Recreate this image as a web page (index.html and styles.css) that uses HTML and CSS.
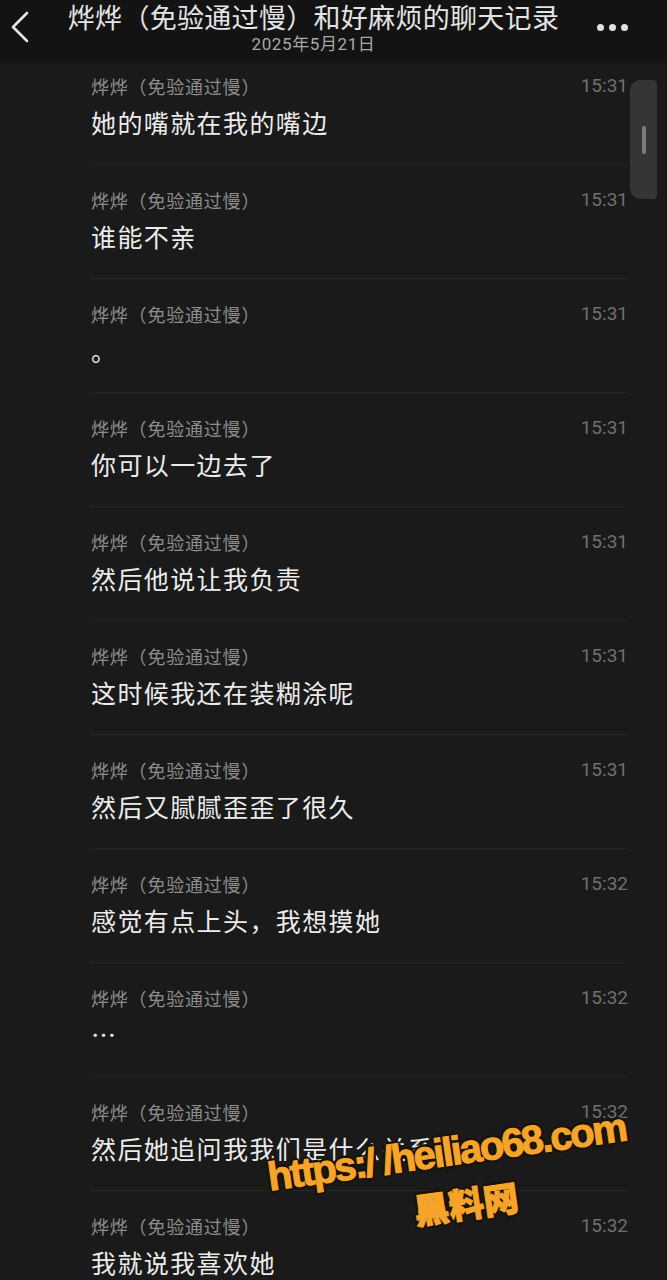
FILE: index.html
```html
<!DOCTYPE html>
<html lang="zh-CN">
<head>
    <meta charset="UTF-8">
    <meta name="viewport" content="width=device-width, initial-scale=1.0">
    <title>聊天记录</title>
    <link rel="stylesheet" href="styles.css">
</head>
<body>
    <div class="screen">
        <div class="header">
            <div class="back">
                <svg width="22" height="32" viewBox="0 0 22 32"><path d="M18 2 L4 16 L18 30" fill="none" stroke="#e6e6e6" stroke-width="2.6" stroke-linecap="round" stroke-linejoin="round"/></svg>
            </div>
            <div class="titles">
                <div class="title">烨烨（免验通过慢）和好麻烦的聊天记录</div>
                <div class="date">2025年5月21日</div>
            </div>
            <div class="more"><span></span><span></span><span></span></div>
        </div>

        <div class="list">
            <div class="row">
                <div class="meta"><span class="name">烨烨（免验通过慢）</span><span class="time">15:31</span></div>
                <div class="text">她的嘴就在我的嘴边</div>
            </div>
            <div class="row">
                <div class="meta"><span class="name">烨烨（免验通过慢）</span><span class="time">15:31</span></div>
                <div class="text">谁能不亲</div>
            </div>
            <div class="row">
                <div class="meta"><span class="name">烨烨（免验通过慢）</span><span class="time">15:31</span></div>
                <div class="text">。</div>
            </div>
            <div class="row">
                <div class="meta"><span class="name">烨烨（免验通过慢）</span><span class="time">15:31</span></div>
                <div class="text">你可以一边去了</div>
            </div>
            <div class="row">
                <div class="meta"><span class="name">烨烨（免验通过慢）</span><span class="time">15:31</span></div>
                <div class="text">然后他说让我负责</div>
            </div>
            <div class="row">
                <div class="meta"><span class="name">烨烨（免验通过慢）</span><span class="time">15:31</span></div>
                <div class="text">这时候我还在装糊涂呢</div>
            </div>
            <div class="row">
                <div class="meta"><span class="name">烨烨（免验通过慢）</span><span class="time">15:31</span></div>
                <div class="text">然后又腻腻歪歪了很久</div>
            </div>
            <div class="row">
                <div class="meta"><span class="name">烨烨（免验通过慢）</span><span class="time">15:32</span></div>
                <div class="text">感觉有点上头，我想摸她</div>
            </div>
            <div class="row">
                <div class="meta"><span class="name">烨烨（免验通过慢）</span><span class="time">15:32</span></div>
                <div class="text">…</div>
            </div>
            <div class="row">
                <div class="meta"><span class="name">烨烨（免验通过慢）</span><span class="time">15:32</span></div>
                <div class="text">然后她追问我我们是什么关系</div>
            </div>
            <div class="row">
                <div class="meta"><span class="name">烨烨（免验通过慢）</span><span class="time">15:32</span></div>
                <div class="text">我就说我喜欢她</div>
            </div>
        </div>

        <div class="scroll-thumb"><span></span></div>

        <div class="watermark">
            <div class="wm-url">https:/ /heiliao68.com</div>
            <div class="wm-name">黑料网</div>
        </div>
    </div>
</body>
</html>
```

FILE: styles.css
```css
body {
    margin: 0;
    padding: 0;
    background-color: #1a1a1a;
    font-family: "Noto Sans CJK SC", "Noto Sans", sans-serif;
}
.screen {
    position: relative;
    width: 667px;
    height: 1280px;
    overflow: hidden;
    background-color: #1a1a1a;
}
.header {
    position: relative;
    z-index: 2;
    height: 63px;
    background-color: #131313;
    display: flex;
    align-items: flex-start;
}
.back {
    width: 40px;
    padding: 11px 0 0 9px;
    box-sizing: border-box;
}
.titles {
    flex: 1;
    display: flex;
    flex-direction: column;
    align-items: center;
    padding-top: 2px;
}
.title {
    color: #e4e4e4;
    font-size: 27px;
    line-height: 30px;
    letter-spacing: 0.3px;
    white-space: nowrap;
}
.date {
    margin-top: 2px;
    color: #a8a8a8;
    font-family: Roboto, "Noto Sans CJK SC", sans-serif;
    font-size: 17px;
    line-height: 20px;
    letter-spacing: 0.6px;
}
.more {
    width: 80px;
    display: flex;
    gap: 5px;
    padding: 24px 0 0 10px;
    box-sizing: border-box;
}
.more span {
    width: 7px;
    height: 7px;
    border-radius: 50%;
    background-color: #e0e0e0;
}
.list {
    margin-top: -12px;
    padding: 0 39px 0 91px;
}
.row {
    padding: 24px 0 27px 0;
    border-bottom: 1px solid #262626;
}
.meta {
    display: flex;
    justify-content: space-between;
    align-items: center;
    height: 22px;
}
.name {
    color: #8c8c8c;
    font-size: 18px;
    line-height: 22px;
    letter-spacing: 0.8px;
}
.time {
    color: #6f6f6f;
    font-family: Roboto, sans-serif;
    font-size: 19px;
    line-height: 22px;
}
.text {
    margin-top: 10px;
    color: #ececec;
    font-size: 25px;
    line-height: 30px;
    letter-spacing: 1.4px;
}
.scroll-thumb {
    position: absolute;
    top: 80px;
    left: 630px;
    width: 27px;
    height: 119px;
    border-radius: 11px 4px 4px 11px;
    background-color: #353535;
    display: flex;
    justify-content: center;
    align-items: center;
}
.scroll-thumb span {
    width: 4px;
    height: 28px;
    border-radius: 2px;
    background-color: #7a7a7a;
}
.watermark {
    position: absolute;
    left: 265px;
    top: 1156px;
    transform: rotate(-8deg);
    transform-origin: left top;
    display: flex;
    flex-direction: column;
    align-items: flex-start;
    color: #f6a52a;
    font-family: "Liberation Sans", sans-serif;
    font-weight: bold;
    white-space: nowrap;
    -webkit-text-stroke: 1px #f6a52a;
    text-shadow: -2px -2px 0 #1a1205, 2px -2px 0 #1a1205, -2px 2px 0 #1a1205, 2px 2px 0 #1a1205, 0 3px 0 #1a1205, 0 -3px 0 #1a1205, 3px 0 0 #1a1205, -3px 0 0 #1a1205;
}
.wm-url {
    font-size: 40px;
    line-height: 42px;
    letter-spacing: -2.2px;
}
.wm-name {
    font-family: "Noto Sans CJK SC", sans-serif;
    font-size: 35px;
    line-height: 40px;
    font-weight: 900;
    margin: 12px 0 0 140px;
}
```
